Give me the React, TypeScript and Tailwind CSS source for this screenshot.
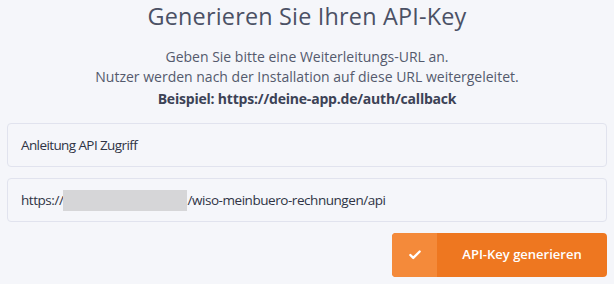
import { Check } from "lucide-react";

export default function App() {
  return (
    <div
      className="w-[614px] h-[284px] bg-[#f5f6fa] px-[7px] pt-[1px] text-[#3f4659]"
      style={{ fontFamily: '"Open Sans", "Noto Sans", sans-serif' }}
    >
      <h1 className="text-center text-[23.4px] leading-[30px] text-[#4b5165] tracking-[0.2px]">
        Generieren Sie Ihren API-Key
      </h1>
      <div className="mt-[16px] text-center text-[14px] leading-[20px] text-[#545a6d]">
        <p>Geben Sie bitte eine Weiterleitungs-URL an.</p>
        <p>Nutzer werden nach der Installation auf diese URL weitergeleitet.</p>
        <p className="font-bold text-[#3c4256] mt-[2px] tracking-[-0.2px]">Beispiel: https://deine-app.de/auth/callback</p>
      </div>
      <div className="mt-[14px] flex flex-col gap-[11px]">
        <div className="h-[44px] rounded-[4px] border border-[#e1e3ee] flex items-center px-[13px] text-[13.5px] tracking-[-0.6px] text-[#2f3445]">
          Anleitung API Zugriff
        </div>
        <div className="h-[44px] rounded-[4px] border border-[#e1e3ee] flex items-center px-[13px] text-[13.5px] tracking-[-0.45px] text-[#2f3445]">
          <span>https://</span>
          <span className="inline-block w-[124px] h-[21px] bg-[#d6d6d8]"></span>
          <span>/wiso-meinbuero-rechnungen/api</span>
        </div>
      </div>
      <div className="mt-[11px] flex justify-end">
        <button className="h-[44px] w-[215px] rounded-[4px] bg-[#ee7720] flex overflow-hidden text-white">
          <span className="w-[45px] h-full bg-[#f48a3a] flex items-center justify-center">
            <Check size={14} strokeWidth={4} />
          </span>
          <span className="flex-1 flex items-center justify-center text-[13px] font-semibold">
            API-Key generieren
          </span>
        </button>
      </div>
    </div>
  );
}
